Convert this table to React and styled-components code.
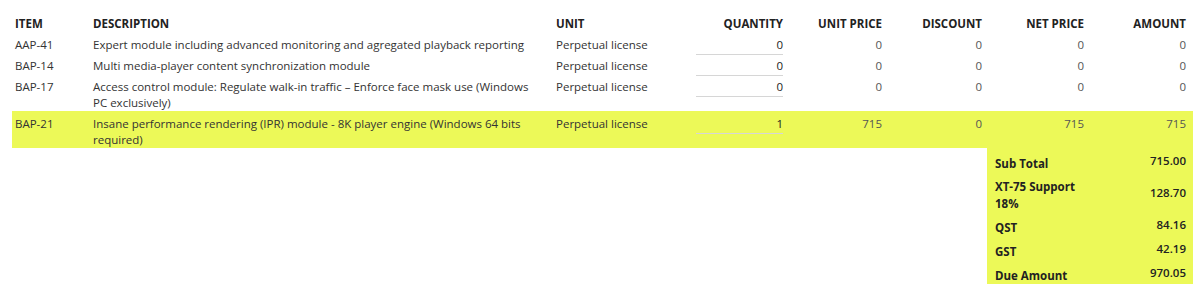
import React from "react";
import styled, { createGlobalStyle } from "styled-components";

const GlobalStyle = createGlobalStyle`
  body {
    margin: 0;
    background: #fff;
    font-family: "Open Sans", "Liberation Sans", sans-serif;
    font-size: 11.5px;
    color: #333;
  }
`;

const columns = [
  { key: "item", label: "ITEM", width: 78 },
  { key: "description", label: "DESCRIPTION", width: 463 },
  { key: "unit", label: "UNIT", width: 137 },
  { key: "quantity", label: "QUANTITY", width: 97, right: true },
  { key: "unitPrice", label: "UNIT PRICE", width: 99, right: true },
  { key: "discount", label: "DISCOUNT", width: 100, right: true },
  { key: "netPrice", label: "NET PRICE", width: 102, right: true },
  { key: "amount", label: "AMOUNT", width: 105, right: true },
];

const lines = [
  {
    item: "AAP-41",
    description:
      "Expert module including advanced monitoring and agregated playback reporting",
    unit: "Perpetual license",
    quantity: 0,
    unitPrice: 0,
    discount: 0,
    netPrice: 0,
    amount: 0,
  },
  {
    item: "BAP-14",
    description: "Multi media-player content synchronization module",
    unit: "Perpetual license",
    quantity: 0,
    unitPrice: 0,
    discount: 0,
    netPrice: 0,
    amount: 0,
  },
  {
    item: "BAP-17",
    description:
      "Access control module: Regulate walk-in traffic – Enforce face mask use (Windows PC exclusively)",
    unit: "Perpetual license",
    quantity: 0,
    unitPrice: 0,
    discount: 0,
    netPrice: 0,
    amount: 0,
  },
  {
    item: "BAP-21",
    description:
      "Insane performance rendering (IPR) module - 8K player engine (Windows 64 bits required)",
    unit: "Perpetual license",
    quantity: 1,
    unitPrice: 715,
    discount: 0,
    netPrice: 715,
    amount: 715,
    selected: true,
  },
];

const totals = [
  { label: "Sub Total", value: "715.00" },
  { label: "XT-75 Support 18%", value: "128.70", wrap: true },
  { label: "QST", value: "84.16" },
  { label: "GST", value: "42.19" },
  { label: "Due Amount", value: "970.05" },
];

const App = () => {
  return (
    <>
      <GlobalStyle />
      <QuoteWrapper>
        <LinesTable>
          <colgroup>
            {columns.map((c) => (
              <col key={c.key} style={{ width: c.width }} />
            ))}
          </colgroup>
          <thead>
            <tr>
              {columns.map((c) => (
                <HeadCell key={c.key} $right={c.right}>
                  {c.label}
                </HeadCell>
              ))}
            </tr>
          </thead>
          <tbody>
            {lines.map((line) => (
              <LineRow key={line.item} $selected={line.selected}>
                <Cell>{line.item}</Cell>
                <DescCell>{line.description}</DescCell>
                <Cell>{line.unit}</Cell>
                <Cell $right>
                  <QtyInput>{line.quantity}</QtyInput>
                </Cell>
                <NumCell>{line.unitPrice}</NumCell>
                <NumCell>{line.discount}</NumCell>
                <NumCell>{line.netPrice}</NumCell>
                <NumCell>{line.amount}</NumCell>
              </LineRow>
            ))}
          </tbody>
        </LinesTable>
        <TotalsPanel>
          {totals.map((t) => (
            <TotalRow key={t.label}>
              <TotalLabel $wrap={t.wrap}>{t.label}</TotalLabel>
              <TotalValue>{t.value}</TotalValue>
            </TotalRow>
          ))}
        </TotalsPanel>
      </QuoteWrapper>
    </>
  );
};

export default App;

const highlight = "#ecf958";

const QuoteWrapper = styled.div`
  padding: 13px 7px 0 12px;
  display: flex;
  flex-direction: column;
`;

const LinesTable = styled.table`
  width: 1181px;
  border-collapse: collapse;
  table-layout: fixed;
  line-height: 16px;
`;

const HeadCell = styled.th`
  padding: 3px 4px 0 3px;
  font-weight: 700;
  color: #222;
  text-align: ${(p) => (p.$right ? "right" : "left")};
  vertical-align: top;
  white-space: nowrap;
  &:last-child {
    padding-right: 7px;
  }
`;

const LineRow = styled.tr`
  background: ${(p) => (p.$selected ? highlight : "transparent")};
`;

const Cell = styled.td`
  padding: 5px 4px 0 3px;
  vertical-align: top;
  text-align: ${(p) => (p.$right ? "right" : "left")};
  &:last-child {
    padding-right: 7px;
  }
`;

const DescCell = styled(Cell)`
  padding-right: 16px;
`;

const NumCell = styled(Cell)`
  text-align: right;
  color: #555;
`;

const QtyInput = styled.div`
  width: 87px;
  margin-left: auto;
  margin-bottom: -2px;
  padding-bottom: 1px;
  border-bottom: 1px solid #d6d6d6;
  color: #222;
  text-align: right;
`;

const TotalsPanel = styled.div`
  align-self: flex-end;
  width: 206px;
  background: ${highlight};
  padding: 0 7px 0 8px;
  box-sizing: border-box;
`;

const TotalRow = styled.div`
  display: flex;
  justify-content: space-between;
  align-items: center;
`;

const TotalLabel = styled.div`
  padding: ${(p) => (p.$wrap ? "6px 0 0" : "7px 0 0")};
  line-height: 17px;
  font-weight: 700;
  color: #222;
  max-width: ${(p) => (p.$wrap ? "100px" : "none")};
`;

const TotalValue = styled.div`
  font-weight: 600;
  line-height: 17px;
  color: #222;
  text-align: right;
`;
